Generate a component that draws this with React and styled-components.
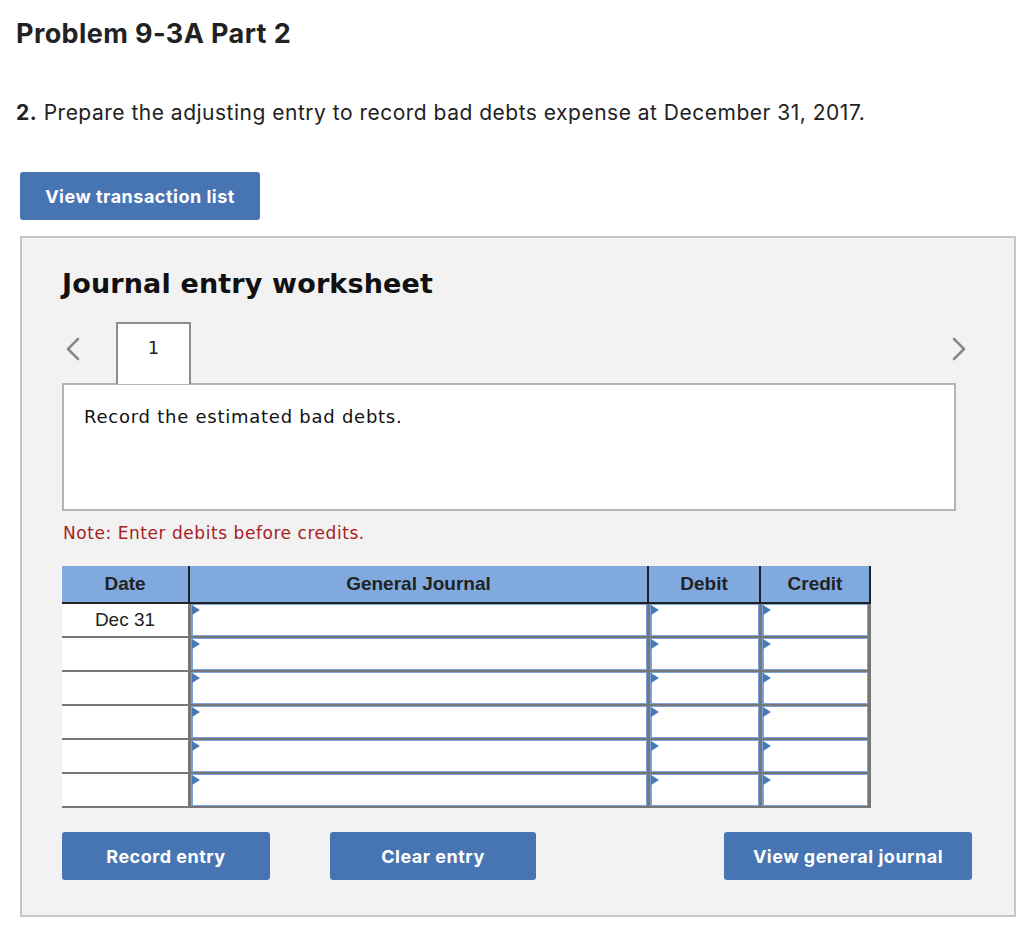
import React from "react";
import styled, { createGlobalStyle } from "styled-components";

const GlobalStyle = createGlobalStyle`
  body {
    margin: 0;
    background: #fff;
    font-family: "Inter", "Liberation Sans", sans-serif;
    color: #222;
  }
`;

const rows = ["Dec 31", "", "", "", "", ""];

const Page = styled.div`
  width: 1034px;
  box-sizing: border-box;
  padding: 18px 18px 0 16px;
`;

const Title = styled.h1`
  margin: 0;
  font-family: "Inter", sans-serif;
  font-weight: 700;
  font-size: 27px;
  letter-spacing: 0.4px;
  line-height: 32px;
  color: #222;
`;

const Question = styled.p`
  margin: 49px 0 0;
  font-family: "Inter", sans-serif;
  font-size: 21px;
  letter-spacing: 0.5px;
  line-height: 28px;
  color: #222;

  b {
    font-weight: 700;
  }
`;

const BlueButton = styled.button`
  flex-shrink: 0;
  width: ${(p) => p.$w}px;
  height: 48px;
  margin-left: ${(p) => p.$ml || 0}px;
  border: none;
  border-radius: 3px;
  background: #4775b3;
  color: #fff;
  font-family: "Inter", sans-serif;
  font-weight: 700;
  font-size: 18px;
  letter-spacing: 0.5px;
  cursor: pointer;
  padding: 0;
`;

const TopButton = styled(BlueButton)`
  display: block;
  margin: 45px 0 0 4px;
`;

const Panel = styled.section`
  margin: 16px 0 0 4px;
  width: 996px;
  height: 681px;
  box-sizing: border-box;
  border: 2px solid #c6c6c6;
  background: #f2f2f2;
  padding: 30px 58px 0 40px;
`;

const Heading = styled.h2`
  margin: 0;
  font-family: "DejaVu Sans", Verdana, sans-serif;
  font-weight: 700;
  font-size: 27px;
  letter-spacing: 0.15px;
  line-height: 32px;
  color: #111;
`;

const TabRow = styled.div`
  display: flex;
  align-items: center;
  height: 62px;
  margin: 22px -10px 0 0;
  position: relative;
  z-index: 1;
`;

const Arrow = styled.span`
  display: flex;
  width: ${(p) => p.$w}px;
  padding-left: ${(p) => p.$pl || 0}px;
  box-sizing: border-box;
  margin-top: -8px;
`;

const Tab = styled.div`
  width: 75px;
  height: 62px;
  box-sizing: border-box;
  border: 2px solid #8c8c8c;
  border-bottom: none;
  background: #fff;
  display: flex;
  justify-content: center;
  padding-top: 12px;
  font-family: "DejaVu Sans", Verdana, sans-serif;
  font-size: 18px;
  line-height: 24px;
  color: #222;
`;

const Spacer = styled.div`
  flex: 1;
`;

const Prompt = styled.div`
  height: 128px;
  box-sizing: border-box;
  margin-top: -1px;
  border: 2px solid #b4b4b4;
  background: #fff;
  padding: 20px 20px;
  font-family: "DejaVu Sans", Verdana, sans-serif;
  font-size: 18px;
  letter-spacing: 0.75px;
  line-height: 24px;
  color: #111;
`;

const Note = styled.p`
  margin: 11px 0 0 1px;
  font-family: "DejaVu Sans", Verdana, sans-serif;
  font-size: 17px;
  letter-spacing: 0.55px;
  line-height: 22px;
  color: #a8201f;
`;

const Journal = styled.div`
  margin-top: 22px;
  width: 809px;
  display: grid;
  grid-template-columns: 126px 459px 112px 112px;
  font-family: "Liberation Sans", Arial, sans-serif;
  font-size: 19px;
`;

const HeadCell = styled.div`
  height: 38px;
  box-sizing: border-box;
  background: #80aadf;
  border-bottom: 2px solid #222;
  border-left: ${(p) => (p.$first ? "none" : "2px solid #222")};
  border-right: ${(p) => (p.$last ? "2px solid #222" : "none")};
  display: flex;
  align-items: center;
  justify-content: center;
  font-weight: 700;
  color: #222;
`;

const DateCell = styled.div`
  height: 34px;
  box-sizing: border-box;
  background: #fff;
  border-bottom: 2px solid #777;
  display: flex;
  align-items: center;
  justify-content: center;
  color: #222;
`;

const EntryCell = styled.div`
  height: 34px;
  box-sizing: border-box;
  border-left: 3px solid #777;
  border-right: ${(p) => (p.$last ? "3px solid #777" : "none")};
  border-bottom: 2px solid #777;
  background: #fff;
  display: flex;
`;

const EntryInput = styled.div`
  flex: 1;
  position: relative;
  border: 1px solid #7aa2d8;
  border-left-width: 2px;
  background: #fff;

  &::before {
    content: "";
    position: absolute;
    left: -1px;
    top: 0;
    border-style: solid;
    border-width: 5px 0 5px 8px;
    border-color: transparent transparent transparent #4a78b5;
  }
`;

const ButtonRow = styled.div`
  display: flex;
  margin-top: 24px;
`;

const Chevron = ({ dir }) => (
  <svg width="14" height="24" viewBox="0 0 14 24">
    <polyline
      points={dir === "left" ? "12,2 2,12 12,22" : "2,2 12,12 2,22"}
      fill="none"
      stroke="#8a8a8a"
      strokeWidth="2.6"
      strokeLinecap="round"
      strokeLinejoin="round"
    />
  </svg>
);

const App = () => {
  return (
    <>
      <GlobalStyle />
      <Page>
        <Title>Problem 9-3A Part 2</Title>
        <Question>
          <b>2.</b> Prepare the adjusting entry to record bad debts expense at
          December 31, 2017.
        </Question>
        <TopButton $w={240}>View transaction list</TopButton>

        <Panel>
          <Heading>Journal entry worksheet</Heading>
          <TabRow>
            <Arrow $w={54} $pl={4}>
              <Chevron dir="left" />
            </Arrow>
            <Tab>1</Tab>
            <Spacer />
            <Arrow $w={14}>
              <Chevron dir="right" />
            </Arrow>
          </TabRow>
          <Prompt>Record the estimated bad debts.</Prompt>
          <Note>Note: Enter debits before credits.</Note>

          <Journal>
            <HeadCell $first>Date</HeadCell>
            <HeadCell>General Journal</HeadCell>
            <HeadCell>Debit</HeadCell>
            <HeadCell $last>Credit</HeadCell>
            {rows.map((d, i) => (
              <React.Fragment key={i}>
                <DateCell>{d}</DateCell>
                <EntryCell>
                  <EntryInput />
                </EntryCell>
                <EntryCell>
                  <EntryInput />
                </EntryCell>
                <EntryCell $last>
                  <EntryInput />
                </EntryCell>
              </React.Fragment>
            ))}
          </Journal>

          <ButtonRow>
            <BlueButton $w={208}>Record entry</BlueButton>
            <BlueButton $w={206} $ml={60}>
              Clear entry
            </BlueButton>
            <BlueButton $w={248} $ml={188}>
              View general journal
            </BlueButton>
          </ButtonRow>
        </Panel>
      </Page>
    </>
  );
};

export default App;
